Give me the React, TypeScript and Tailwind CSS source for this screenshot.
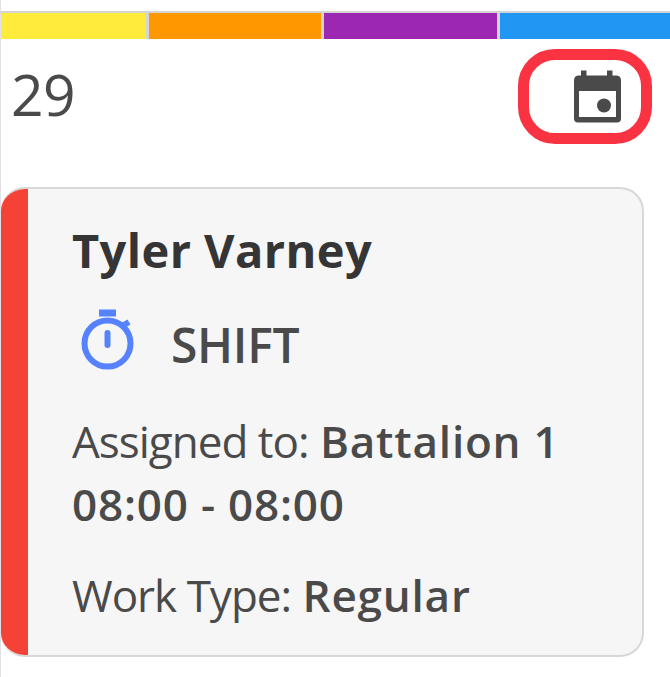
const bars = [
  'w-[145px] bg-[#ffeb3b]',
  'w-[172px] bg-[#ff9800]',
  'w-[173px] bg-[#9c27b0]',
  'flex-1 bg-[#2196f3]',
];

const CalendarIcon = () => (
  <svg className="h-[54px] w-[50px]" viewBox="0 0 50 54" fill="#4a4a4a">
    <path fillRule="evenodd" d="M9 0.500h5.500v5H35v-5h5.500v5H44q5 0 5 5v38q0 4-4 4H6q-4 0-4-4v-38q0-5 5-5h2zM7 21v26h37v-26z" />
    <circle cx="32" cy="35.500" r="7" />
  </svg>
);

const TimerIcon = () => (
  <svg className="h-[62px] w-[54px]" viewBox="0 0 54 62" fill="none" stroke="#5682ff">
    <ellipse cx="27.500" cy="35.500" rx="23" ry="23" strokeWidth="6" />
    <path d="M19 5h17" strokeWidth="7" />
    <path d="M27.500 25v12" strokeWidth="6" strokeLinecap="round" />
    <path d="M42 18l7-4" strokeWidth="6" />
  </svg>
);

const ShiftCard = () => (
  <div className="flex h-[470px] w-[643px] overflow-hidden rounded-[24px] border-2 border-l-0 border-[#d8d8d8] bg-[#f6f6f6]">
    <div className="w-[27px] shrink-0 bg-[#f44336]" />
    <div className="pl-[44px] whitespace-nowrap">
      <h2 className="mt-[32px] text-[47px] leading-[58px] font-bold tracking-[0.4px] text-[#353535]">Tyler Varney</h2>
      <div className="mt-[29px] flex h-[62px] items-center pl-2">
        <TimerIcon />
        <span className="mt-3 ml-[37px] text-[48px] leading-[62px] font-semibold tracking-[-0.3px]">SHIFT</span>
      </div>
      <p className="mt-[40px] text-[44px] leading-[63px] tracking-[-1px]">
        Assigned to: <b className="ml-px font-semibold tracking-[0.8px]">Battalion 1</b>
      </p>
      <p className="text-[44px] leading-[63px] font-semibold tracking-[0.8px]">08:00 - 08:00</p>
      <p className="mt-[28px] text-[44px] leading-[63px] tracking-[-1px]">
        Work Type: <b className="ml-px font-semibold tracking-[0.8px]">Regular</b>
      </p>
    </div>
  </div>
);

export default function App() {
  return (
    <div className="h-[677px] w-[670px] overflow-hidden border-l border-[#e2e0e6] bg-white pt-[11px] font-['Open_Sans',sans-serif] text-[#4a4a4a]">
      <div className="flex h-7 gap-[3px] border-t-2 border-[#d4d4d4] bg-[#d4d4d4]">
        {bars.map((bar) => <div key={bar} className={bar} />)}
      </div>
      <div className="flex h-[148px] justify-between pr-[18px] pl-[10px]">
        <span className="mt-[18px] text-[57px] leading-[74px] tracking-[-0.5px]">29</span>
        <div className="mt-[10px] flex h-[95px] w-[134px] items-center justify-end rounded-[37px] border-[11px] border-[#fa3343] pr-[19px]">
          <CalendarIcon />
        </div>
      </div>
      <ShiftCard />
    </div>
  );
}
